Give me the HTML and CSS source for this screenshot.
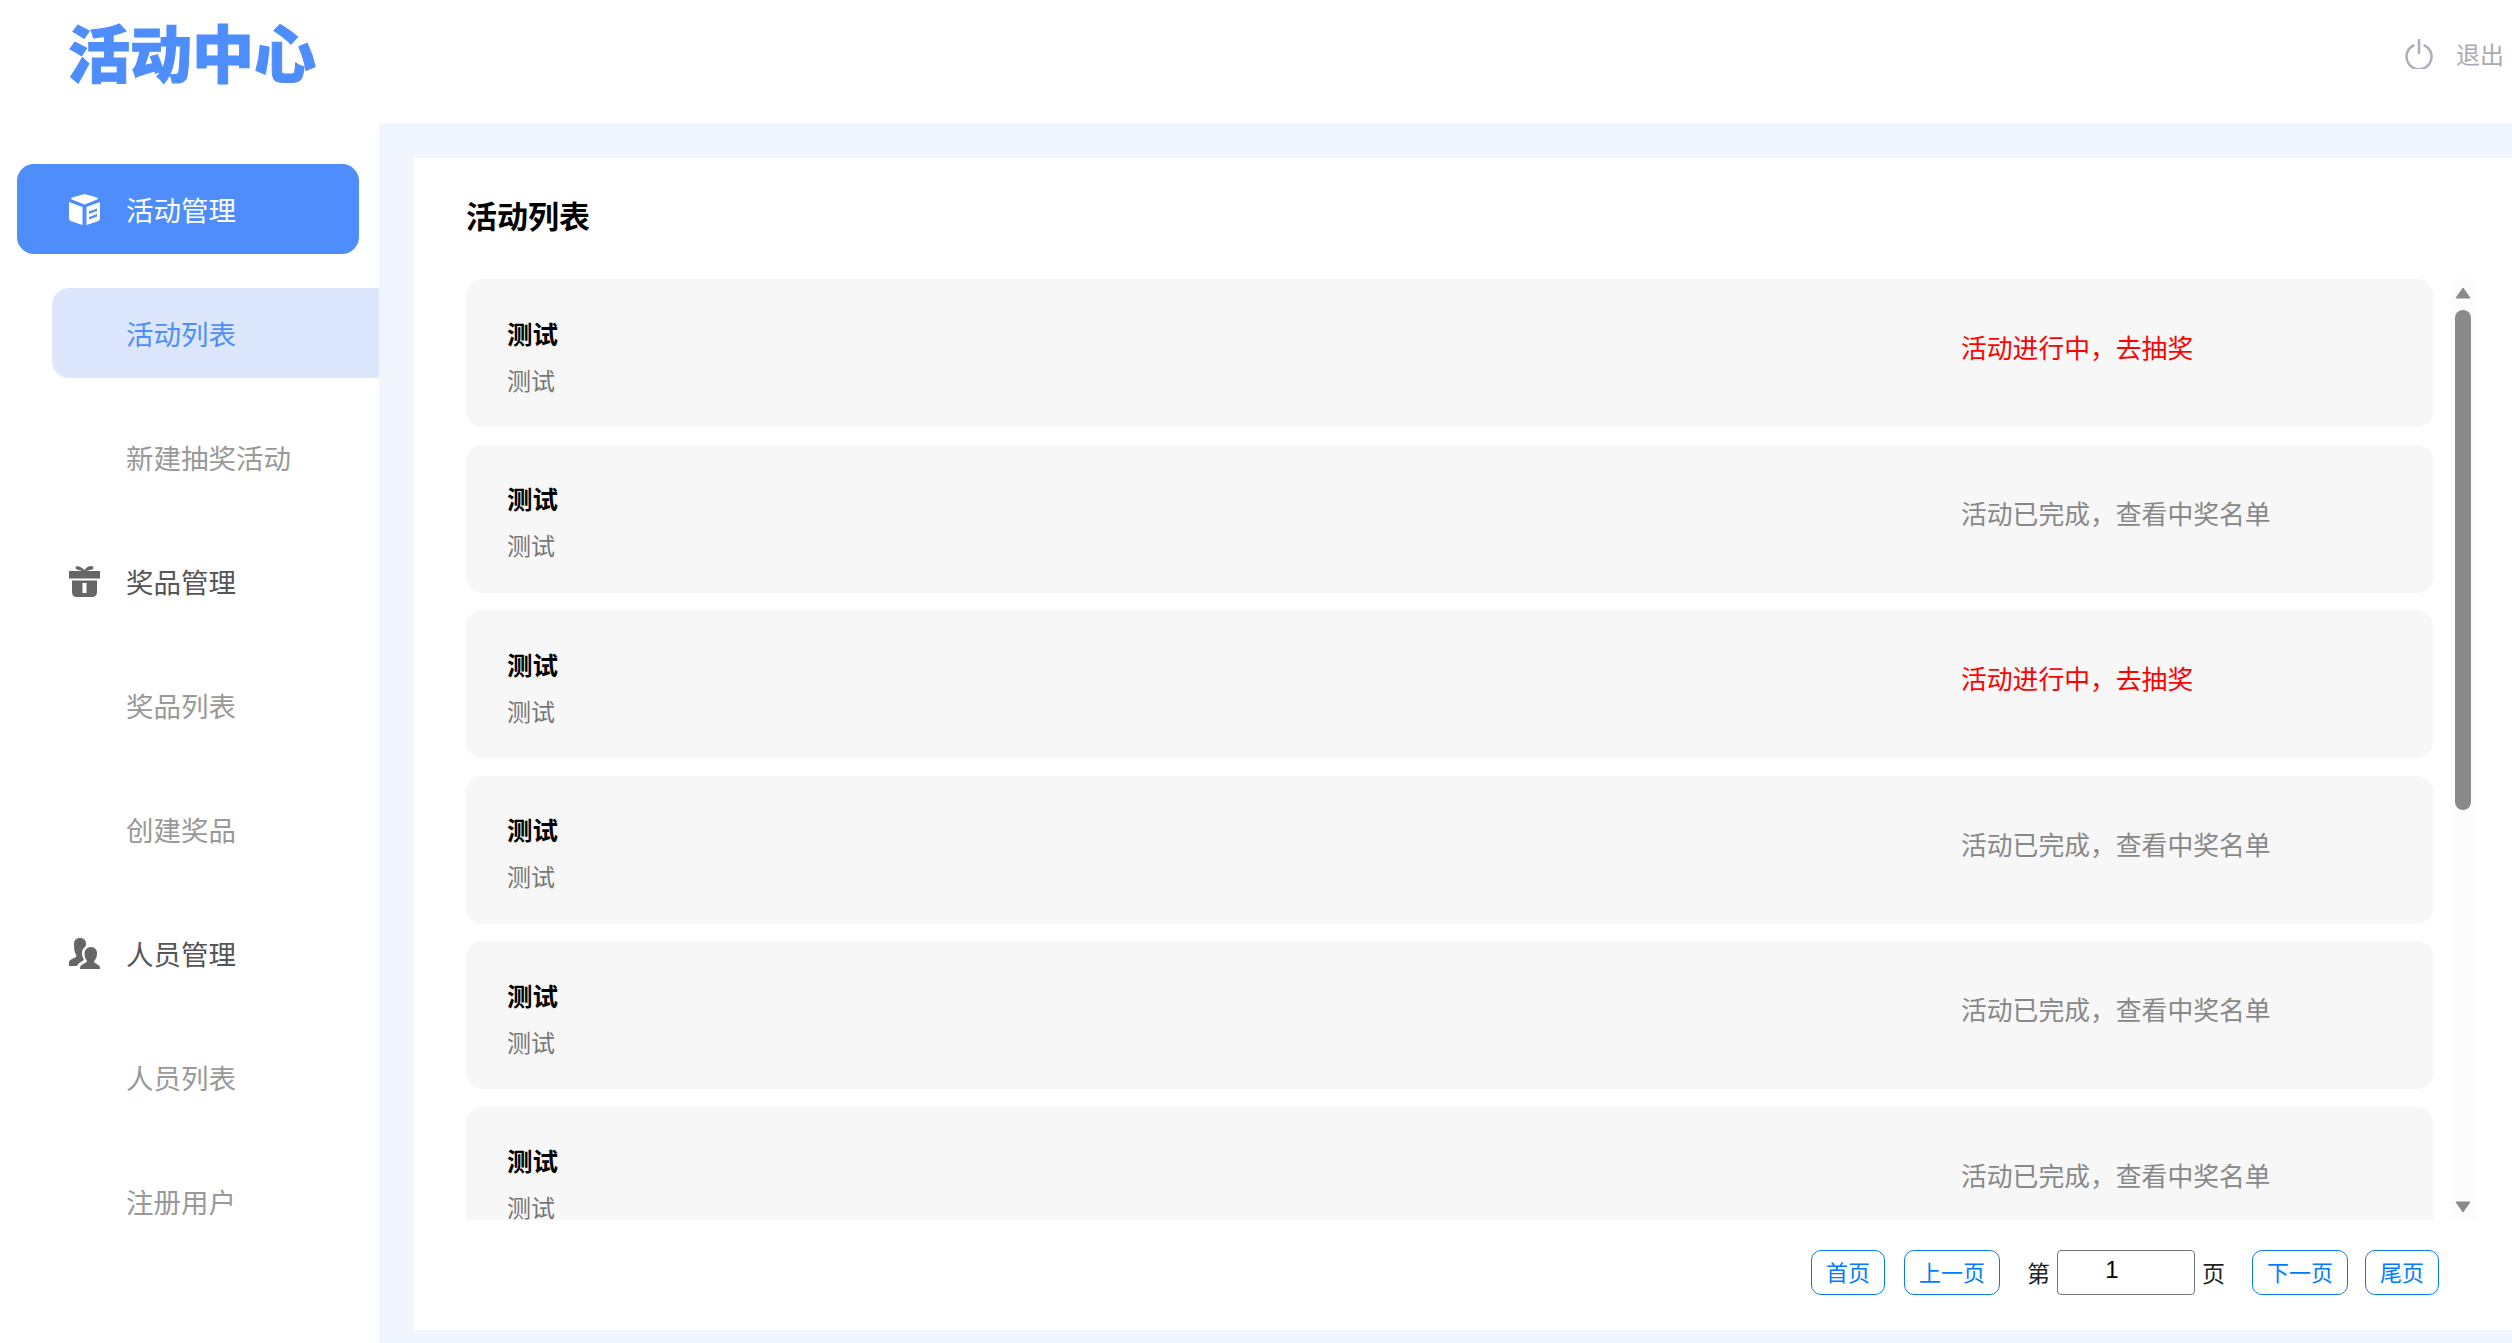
FILE: index.html
```html
<!DOCTYPE html>
<html>
<head>
    <title>活动中心</title>
    <link rel="stylesheet" href="styles.css">
</head>
<body>
    <header class="top">
        <div class="logo">活动中心</div>
        <div class="logout">
            <svg class="power" viewBox="0 0 28 30"><path d="M8.500 6.500a12.500 12.500 0 1 0 11 0M14 1v13"/></svg>
            <span>退出</span>
        </div>
    </header>
    <div class="layout">
        <nav class="side">
            <a class="menu menu-on">
                <svg class="icon" viewBox="0 0 31 31"><path d="M15.500 0 28 3.500Q30 4.500 28 5.500L15.500 10.500 3 5.500Q1 4.500 3 3.500zM0 8l13.500 5V31L3 27.500Q0 26.500 0 24zM31 8v16q0 2.500-3 3.500L17.500 31V13zM20 17.500v2.500l8-3v-2.500zM20 23v2.500l8-3V20z" fill-rule="evenodd"/></svg>
                活动管理
            </a>
            <a class="sub sub-on">活动列表</a>
            <a class="sub">新建抽奖活动</a>
            <a class="menu">
                <svg class="icon" viewBox="0 0 31 31"><path d="M0 5h13.500L9 3.800C6.500 3 6 1.500 7 .7 8.500-.3 12 .5 15.500 4 19-.5 22.500-.3 24 .7c1 .8.500 2.300-2 3.100L17.500 5H31v7.500H0zM3 14.500h25V26q0 5-5 5H8q-5 0-5-5zM13.500 17v10h4V17z" fill-rule="evenodd"/></svg>
                奖品管理
            </a>
            <a class="sub">奖品列表</a>
            <a class="sub">创建奖品</a>
            <a class="menu">
                <svg class="icon" viewBox="0 0 31 31"><path d="M11 0c4 0 6 2.500 6 6 0 1-.1 1.800-.4 2.500-2.500 1.500-3.600 4-3.600 7 0 2.500 1 4.500 2 6.500l-4 2.500c-1.500 1-2.500 2-3 3.500H0v-3.500c0-1.500 1-2.500 3-3.500l4-2c.5-1 .5-2-.3-3C5.500 14 5 11 5 6c0-3.500 2-6 6-6zM22 9c4 0 6 3 6 6.500 0 3-1 5.500-2.500 7-.5 1-.5 2 .5 2.500l2.500 1.500c2 1 2.500 2 2.500 4.500H11c0-2.500.5-3.500 2.500-4.500L17 24.500c1-.5 1-1.500.5-2.500C16 20.500 15.500 18 15.500 15.500 15.500 12 18 9 22 9z"/></svg>
                人员管理
            </a>
            <a class="sub">人员列表</a>
            <a class="sub">注册用户</a>
        </nav>
        <main class="main">
            <section class="card">
                <h1 class="title">活动列表</h1>
                <div class="body">
                    <div class="list">
                        <div class="row"><div class="info"><b>测试</b><p>测试</p></div><a class="state state-on">活动进行中，去抽奖</a></div>
                        <div class="row"><div class="info"><b>测试</b><p>测试</p></div><a class="state">活动已完成，查看中奖名单</a></div>
                        <div class="row"><div class="info"><b>测试</b><p>测试</p></div><a class="state state-on">活动进行中，去抽奖</a></div>
                        <div class="row"><div class="info"><b>测试</b><p>测试</p></div><a class="state">活动已完成，查看中奖名单</a></div>
                        <div class="row"><div class="info"><b>测试</b><p>测试</p></div><a class="state">活动已完成，查看中奖名单</a></div>
                        <div class="row"><div class="info"><b>测试</b><p>测试</p></div><a class="state">活动已完成，查看中奖名单</a></div>
                    </div>
                    <div class="bar">
                        <svg class="arrow" viewBox="0 0 16 12"><path d="M8 1 15 11H1z"/></svg>
                        <div class="thumb"></div>
                        <svg class="arrow arrow-down" viewBox="0 0 16 12"><path d="M1 1H15L8 11z"/></svg>
                    </div>
                </div>
                <div class="pager">
                    <button class="btn btn-first">首页</button>
                    <button class="btn">上一页</button>
                    <label class="jump">第<input class="page-num" type="text" value="1">页</label>
                    <button class="btn">下一页</button>
                    <button class="btn">尾页</button>
                </div>
            </section>
        </main>
    </div>
</body>
</html>
```
FILE: styles.css
```css
* {
    box-sizing: border-box;
}

html, body {
    height: 100%;
}

body {
    margin: 0;
    overflow: hidden;
    background-color: #fff;
    font-family: "Noto Sans CJK SC", "Liberation Sans", sans-serif;
}

.top {
    display: flex;
    align-items: center;
    justify-content: space-between;
    height: 123px;
    padding: 0 8px 16px 68px;
}

.logo {
    margin-top: -5px;
    font-size: 62px;
    line-height: 70px;
    font-weight: 900;
    -webkit-text-stroke: 1px #4e8dfc;
    color: #4e8dfc;
}

.logout {
    display: flex;
    align-items: center;
    gap: 23px;
    font-size: 24px;
    color: #a9abb3;
}

.power {
    width: 28px;
    height: 30px;
    fill: none;
    stroke: #adb0b8;
    stroke-width: 2.600;
    stroke-linecap: round;
}

.layout {
    display: flex;
    height: 1220px;
}

.side {
    display: flex;
    flex-direction: column;
    gap: 34px;
    flex: none;
    width: 379px;
    padding-top: 41px;
}

.menu, .sub {
    display: flex;
    align-items: center;
    height: 90px;
    font-size: 27.500px;
}

.menu {
    gap: 26px;
    width: 342px;
    margin-left: 17px;
    padding-left: 52px;
    border-radius: 17px;
    color: #555;
}

.menu-on {
    background-color: #4f8dfd;
    color: #fff;
}

.icon {
    width: 31px;
    height: 31px;
    fill: #666;
}

.menu-on .icon {
    fill: #fff;
}

.sub {
    margin-left: 52px;
    padding-left: 74px;
    color: #999;
}

.sub-on {
    background-color: #dce7fe;
    border-radius: 17px 0 0 17px;
    color: #4f8dfd;
}

.main {
    flex: 1;
    padding: 35px 0 13px 35px;
    background-color: #f1f5fe;
}

.card {
    display: flex;
    flex-direction: column;
    height: 100%;
    padding: 0 36px 0 52px;
    background-color: #fff;
}

.title {
    margin: 0;
    height: 121px;
    padding-top: 34px;
    font-size: 31px;
    line-height: 46px;
    font-weight: 700;
    color: #000;
}

.body {
    display: flex;
    gap: 17px;
    height: 941px;
}

.list {
    display: flex;
    flex-direction: column;
    gap: 17.500px;
    flex: none;
    width: 1967px;
    overflow: hidden;
}

.row {
    display: flex;
    align-items: center;
    flex: none;
    height: 148px;
    padding-left: 41px;
    background-color: #f7f7f7;
    border-radius: 16px;
}

.info {
    width: 1454px;
    padding-top: 6px;
}

.info b {
    display: block;
    font-size: 25.500px;
    line-height: 36px;
    color: #000;
}

.info p {
    margin: 11px 0 0 0;
    font-size: 24px;
    line-height: 36px;
    color: #777;
}

.state {
    margin-bottom: 13px;
    font-size: 25.800px;
    color: #888;
}

.state-on {
    color: #f00;
}

.bar {
    display: flex;
    flex-direction: column;
    align-items: center;
    width: 26px;
    padding-top: 8px;
    background-color: #fcfcfc;
}

.arrow {
    flex: none;
    width: 16px;
    height: 12px;
    fill: #8a8a8a;
    stroke: #8a8a8a;
    stroke-linejoin: round;
}

.arrow-down {
    margin-top: auto;
    margin-bottom: 7px;
}

.thumb {
    width: 16px;
    height: 500px;
    margin-top: 11px;
    background-color: #8a8a8a;
    border-radius: 8px;
}

.pager {
    display: flex;
    align-items: center;
    height: 110px;
    padding-left: 1345px;
    padding-bottom: 6px;
    font-size: 22px;
}

.btn {
    height: 45px;
    margin-right: 17px;
    padding: 0 14px 2px 14px;
    background-color: #fff;
    border: 1.500px solid #0a7cf2;
    border-radius: 10px;
    font: inherit;
    color: #007bff;
}

.btn-first {
    margin-right: 19px;
}

.jump {
    display: flex;
    align-items: center;
    gap: 7px;
    margin: 0 27px 0 10px;
    font-size: 23px;
    color: #222;
}

.page-num {
    width: 138px;
    height: 45px;
    padding: 0 28px 4px 0;
    background-color: #fff;
    border: 1.500px solid #767676;
    border-radius: 4px;
    font: 24px "Liberation Sans", sans-serif;
    text-align: center;
    color: #000;
}
```
